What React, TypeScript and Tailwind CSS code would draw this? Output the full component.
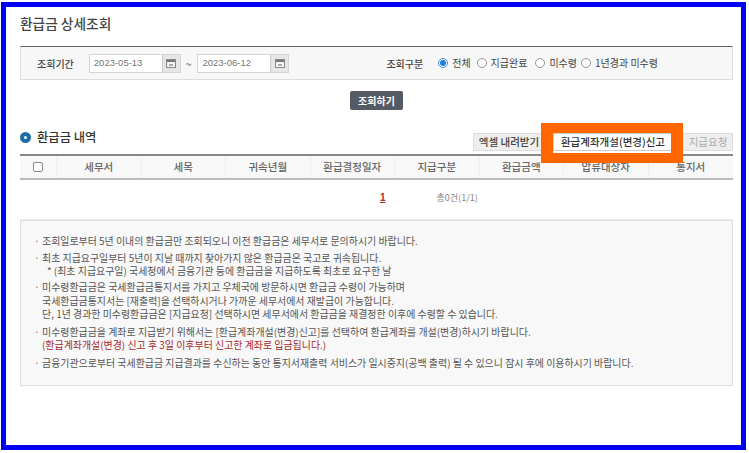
import React from 'react';

const font = { fontFamily: '"Noto Sans CJK KR", "Noto Sans", sans-serif' };

const columns = ['세무서', '세목', '귀속년월', '환급결정일자', '지급구분', '환급금액', '압류대상자', '통지서'];

const CalendarButton = () => (
  <span className="flex h-[17px] w-[18px] items-center justify-center border-l border-[#ccc] bg-[#e6e6e6]">
    <svg width="10" height="9" viewBox="0 0 10 9">
      <rect x="0.5" y="0.5" width="9" height="8" fill="#f4f4f4" stroke="#888" strokeWidth="1" />
      <rect x="1" y="1" width="8" height="2" fill="#777" />
      <rect x="3" y="5" width="4" height="2" fill="#aaa" />
    </svg>
  </span>
);

const DateInput = ({ value }: { value: string }) => (
  <div className="flex h-[19px] w-[92px] items-center justify-between border border-[#d5d5d5] bg-white">
    <span className="pl-[4px] font-['Liberation_Sans'] text-[9.5px] text-[#777]">{value}</span>
    <CalendarButton />
  </div>
);

const Radio = ({ label, checked, className }: { label: string; checked?: boolean; className: string }) => (
  <label className={`flex items-center gap-[4px] ${className}`}>
    <span className={`flex h-[10px] w-[10px] items-center justify-center rounded-full border ${checked ? 'border-[#3b8fdc]' : 'border-[#999]'} bg-white`}>
      {checked && <span className="h-[6px] w-[6px] rounded-full bg-[#1f7fd6]" />}
    </span>
    <span className="text-[10px] leading-none text-[#444]">{label}</span>
  </label>
);

const Note = ({ children, bullet = true, className = '' }: { children: React.ReactNode; bullet?: boolean; className?: string }) => (
  <p className={`flex h-[13.5px] items-center whitespace-nowrap text-[9.95px] leading-none text-[#555] ${className}`}>
    <span className="w-[8px] text-[#888]">{bullet ? '·' : ''}</span>
    {children}
  </p>
);

export default function App() {
  return (
    <div className="h-[453px] w-[749px] overflow-hidden bg-white pl-px pr-[3px] pt-[2px]" style={font}>
      <div className="relative h-[448px] w-[745px] border-[5px] border-[#0000f5] bg-white px-[14px] pt-[6px]">
        <h1 className="text-[13.7px] font-medium leading-[20px] text-[#444]">환급금 상세조회</h1>

        {/* search box */}
        <div className="mt-[13px] flex h-[34px] w-[713px] items-center border border-t-[#666] border-x-[#ddd] border-b-[#ddd] bg-[#f7f7f7]">
          <span className="ml-[16px] text-[10px] font-medium text-[#444]">조회기간</span>
          <div className="ml-[15px]"><DateInput value="2023-05-13" /></div>
          <span className="ml-[5px] mr-[6px] text-[10px] text-[#555]">~</span>
          <DateInput value="2023-06-12" />
          <span className="ml-[97px] text-[10px] font-medium text-[#444]">조회구분</span>
          <Radio label="전체" checked className="ml-[15px]" />
          <Radio label="지급완료" className="ml-[6px]" />
          <Radio label="미수령" className="ml-[8px]" />
          <Radio label="1년경과 미수령" className="ml-[4px]" />
        </div>

        <div className="mt-[11px] flex w-[713px] justify-center">
          <button className="h-[19px] w-[53px] rounded-[2px] bg-[#555b65] text-[10px] font-bold leading-none text-white">조회하기</button>
        </div>

        {/* list header */}
        <div className="mt-[14px] flex h-[30px] w-[713px] items-start justify-between">
          <div className="mt-[2px] flex h-[22px] items-center gap-[6px]">
            <span className="flex h-[11px] w-[11px] items-center justify-center rounded-full bg-[#1c6ea8]">
              <span className="h-[3px] w-[3px] rounded-full bg-white" />
            </span>
            <h2 className="text-[12.3px] font-medium leading-none text-[#333]">환급금 내역</h2>
          </div>
          <div className="mt-[9px] flex h-[18px]">
            <button className="h-[18px] w-[80px] border border-[#ddd] bg-[#eee] pr-[8px] text-[10.5px] font-medium leading-none text-[#444]">엑셀 내려받기</button>
            <button className="h-[18px] w-[120px] border border-[#ccc] bg-white text-[10.5px] font-medium leading-none text-[#333]">환급계좌개설(변경)신고</button>
            <button className="h-[18px] w-[60px] border border-[#ddd] bg-[#eee] pl-[10px] text-[10.5px] leading-none text-[#aaa]">지급요청</button>
          </div>
        </div>

        {/* table */}
        <div className="grid h-[26px] w-[713px] grid-cols-[37px_repeat(8,1fr)] border-b-2 border-t-2 border-b-[#bbb] border-t-[#888] bg-[#f8f8f8]">
          <div className="flex items-center justify-center border-r border-[#eee]">
            <span className="h-[10px] w-[10px] rounded-[2px] border border-[#888] bg-white" />
          </div>
          {columns.map((c) => (
            <div key={c} className="flex items-center justify-center border-r border-[#eee] text-[10.5px] font-medium leading-none text-[#666] last:border-r-0">{c}</div>
          ))}
        </div>
        <div className="flex h-[40px] w-[713px] items-center border-b border-[#eee] pb-[4px] pl-[360px]">
          <span className="font-['Liberation_Sans'] text-[10px] font-bold leading-none text-[#b03030] underline">1</span>
          <span className="ml-[51px] text-[9px] leading-none text-[#888]">총0건(1/1)</span>
        </div>

        {/* notice */}
        <div className="h-[166px] w-[713px] border border-[#ddd] bg-[#f8f8f8] pl-[13px] pt-[13px]">
          <Note>조회일로부터 5년 이내의 환급금만 조회되오니 이전 환급금은 세무서로 문의하시기 바랍니다.</Note>
          <Note className="mt-[3.5px]">최초 지급요구일부터 5년이 지날 때까지 찾아가지 않은 환급금은 국고로 귀속됩니다.</Note>
          <Note bullet={false} className="pl-[5px]">* (최초 지급요구일) 국세청에서 금융기관 등에 환급금을 지급하도록 최초로 요구한 날</Note>
          <Note className="mt-[2.5px]">미수령환급금은 국세환급금통지서를 가지고 우체국에 방문하시면 환급금 수령이 가능하며</Note>
          <Note bullet={false}>국세환급금통지서는 [재출력]을 선택하시거나 가까운 세무서에서 재발급이 가능합니다.</Note>
          <Note bullet={false}>단, 1년 경과한 미수령환급금은 [지급요청] 선택하시면 세무서에서 환급금을 재결정한 이후에 수령할 수 있습니다.</Note>
          <Note className="mt-[4px]">미수령환급금을 계좌로 지급받기 위해서는 [환급계좌개설(변경)신고]를 선택하여 환급계좌를 개설(변경)하시기 바랍니다.</Note>
          <Note bullet={false} className="!text-[#a52a2a]">(환급계좌개설(변경) 신고 후 3일 이후부터 신고한 계좌로 입금됩니다.)</Note>
          <Note className="mt-[4px]">금융기관으로부터 국세환급금 지급결과를 수신하는 동안 통지서재출력 서비스가 일시중지(공백 출력) 될 수 있으니 잠시 후에 이용하시기 바랍니다.</Note>
        </div>

        {/* orange highlight drawn over the screenshot */}
        <div className="absolute left-[535px] top-[116px] h-[40px] w-[142px] border-x-[12px] border-y-[10px] border-[#ff6600]" />
      </div>
    </div>
  );
}
